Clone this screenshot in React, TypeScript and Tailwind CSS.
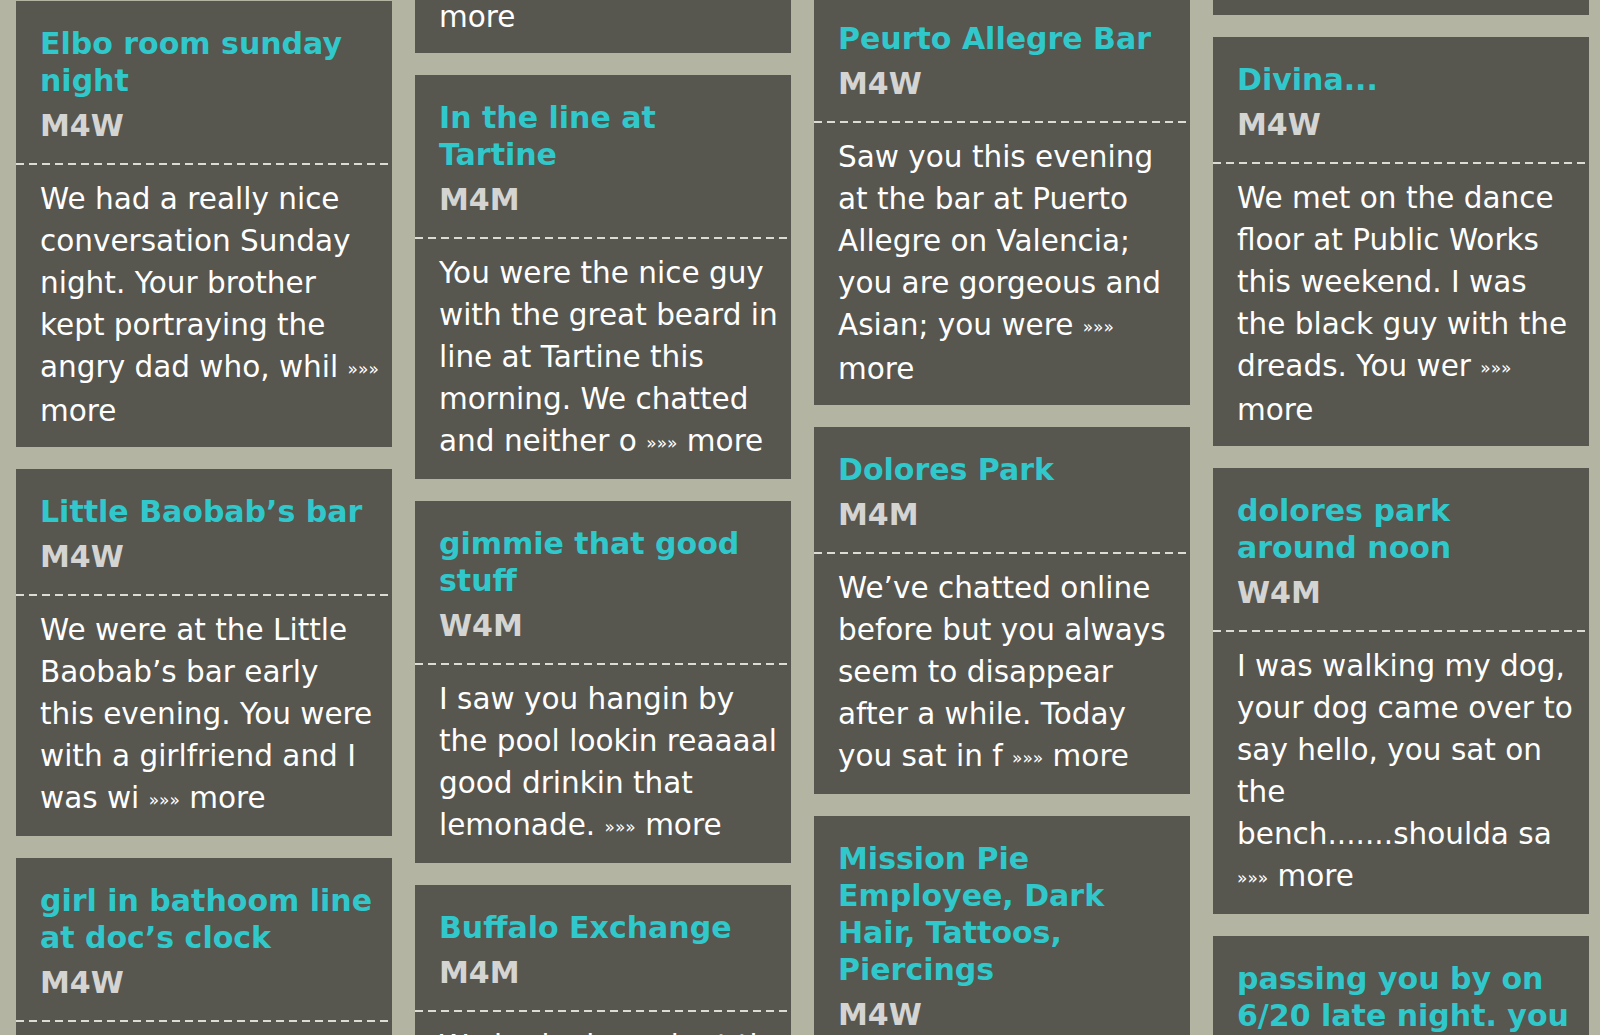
import React from 'react';

type Post = {
  title?: string[];
  tag?: string;
  lines: string[];
  tail?: boolean;
};

// each column is scrolled a little differently, hence the offsets
const columns: { offset: string; posts: Post[] }[] = [
  {
    offset: 'mt-px',
    posts: [
      {
        title: ['Elbo room sunday', 'night'],
        tag: 'M4W',
        lines: [
          'We had a really nice',
          'conversation Sunday',
          'night. Your brother',
          'kept portraying the',
          'angry dad who, whil »»»',
          'more',
        ],
      },
      {
        title: ['Little Baobab’s bar'],
        tag: 'M4W',
        lines: [
          'We were at the Little',
          'Baobab’s bar early',
          'this evening. You were',
          'with a girlfriend and I',
          'was wi »»» more',
        ],
      },
      {
        title: ['girl in bathoom line', 'at doc’s clock'],
        tag: 'M4W',
        lines: ['I saw you in the line', 'for the bathroom »»» more'],
      },
    ],
  },
  {
    offset: 'mt-[-4px]',
    posts: [
      { tail: true, lines: ['more'] },
      {
        title: ['In the line at', 'Tartine'],
        tag: 'M4M',
        lines: [
          'You were the nice guy',
          'with the great beard in',
          'line at Tartine this',
          'morning. We chatted',
          'and neither o »»» more',
        ],
      },
      {
        title: ['gimmie that good', 'stuff'],
        tag: 'W4M',
        lines: [
          'I saw you hangin by',
          'the pool lookin reaaaal',
          'good drinkin that',
          'lemonade. »»» more',
        ],
      },
      {
        title: ['Buffalo Exchange'],
        tag: 'M4M',
        lines: ['We had a brunch at the', 'counter »»» more'],
      },
    ],
  },
  {
    offset: 'mt-[-4px]',
    posts: [
      {
        title: ['Peurto Allegre Bar'],
        tag: 'M4W',
        lines: [
          'Saw you this evening',
          'at the bar at Puerto',
          'Allegre on Valencia;',
          'you are gorgeous and',
          'Asian; you were »»»',
          'more',
        ],
      },
      {
        title: ['Dolores Park'],
        tag: 'M4M',
        lines: [
          'We’ve chatted online',
          'before but you always',
          'seem to disappear',
          'after a while. Today',
          'you sat in f »»» more',
        ],
      },
      {
        title: ['Mission Pie', 'Employee, Dark', 'Hair, Tattoos,', 'Piercings'],
        tag: 'M4W',
        lines: ['You served me a slice', 'of pie »»» more'],
      },
    ],
  },
  {
    offset: 'mt-[-42px]',
    posts: [
      { tail: true, lines: ['more'] },
      {
        title: ['Divina...'],
        tag: 'M4W',
        lines: [
          'We met on the dance',
          'floor at Public Works',
          'this weekend. I was',
          'the black guy with the',
          'dreads. You wer »»»',
          'more',
        ],
      },
      {
        title: ['dolores park', 'around noon'],
        tag: 'W4M',
        lines: [
          'I was walking my dog,',
          'your dog came over to',
          'say hello, you sat on',
          'the',
          'bench.......shoulda sa',
          '»»» more',
        ],
      },
      {
        title: ['passing you by on', '6/20 late night. you'],
        tag: 'M4W',
        lines: ['were walking »»» more'],
      },
    ],
  },
];

function BodyLine({ text }: { text: string }) {
  const parts = text.split('»»»');
  return (
    <div className="whitespace-nowrap">
      {parts.map((part, i) => (
        <React.Fragment key={i}>
          {part}
          {i < parts.length - 1 && <span className="text-[17px] align-[2px]">»»»</span>}
        </React.Fragment>
      ))}
    </div>
  );
}

function PostCard({ post }: { post: Post }) {
  if (post.tail) {
    return (
      <div className="bg-[#57564f] pl-6 pb-[15px] text-[29.5px] leading-[42px] text-white shrink-0">
        {post.lines.map((l, i) => (
          <BodyLine key={i} text={l} />
        ))}
      </div>
    );
  }

  return (
    <div className="bg-[#57564f] shrink-0">
      <div className="px-6 pt-6 pb-[19px]">
        <div className="text-[30px] leading-[37px] font-bold text-[#31c8cc]">
          {post.title?.map((t, i) => (
            <div key={i} className="whitespace-nowrap">{t}</div>
          ))}
        </div>
        <div className="mt-2 text-[30px] leading-[37px] font-bold text-[#d4d4d2]">{post.tag}</div>
      </div>
      <div className="h-[2px] bg-[repeating-linear-gradient(90deg,#dcdcd6_0px,#dcdcd6_8px,transparent_8px,transparent_13px)]" />
      <div className="pl-6 pt-[13px] pb-[15px] text-[29.5px] leading-[42px] text-white">
        {post.lines.map((l, i) => (
          <BodyLine key={i} text={l} />
        ))}
      </div>
    </div>
  );
}

export default function App() {
  return (
    <div className="h-[1035px] w-full overflow-hidden bg-[#b3b4a1] font-['DejaVu_Sans',sans-serif]">
      <div className="flex gap-[23px] pl-4">
        {columns.map((col, ci) => (
          <div key={ci} className={`flex w-[376px] shrink-0 flex-col gap-[22px] ${col.offset}`}>
            {col.posts.map((p, pi) => (
              <PostCard key={pi} post={p} />
            ))}
          </div>
        ))}
      </div>
    </div>
  );
}
